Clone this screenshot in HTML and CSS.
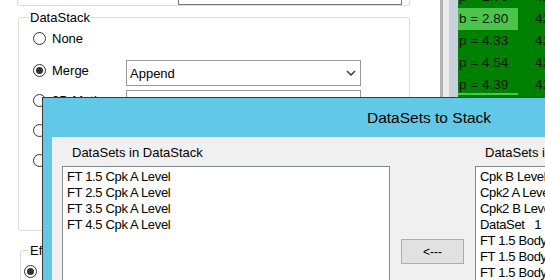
FILE: index.html
```html
<!DOCTYPE html>
<html lang="en">
<head>
    <meta charset="UTF-8">
    <meta name="viewport" content="width=device-width, initial-scale=1.0">
    <title>DataSets to Stack</title>
    <link rel="stylesheet" href="styles.css">
</head>
<body>
    <div class="main">
        <div class="form">
            <div class="topbox"><div class="textbox"></div></div>
            <fieldset class="group stack">
                <legend>DataStack</legend>
                <div class="row first"><label class="opt"><span class="radio"></span>None</label></div>
                <div class="row"><label class="opt"><span class="radio on"></span>Merge</label>
                    <div class="combo">Append
                        <svg width="10" height="6" viewBox="0 0 10 6"><path d="M1 1 L5 5 L9 1" fill="none" stroke="#444" stroke-width="1.6"/></svg>
                    </div>
                </div>
                <div class="row"><label class="opt"><span class="radio"></span>3D Math</label><div class="combo"></div></div>
                <div class="row"><label class="opt"><span class="radio"></span>Filter</label></div>
                <div class="row"><label class="opt"><span class="radio"></span>Sort</label></div>
            </fieldset>
            <fieldset class="group eff">
                <legend>Effect</legend>
                <div class="row first"><label class="opt"><span class="radio on"></span>All</label></div>
            </fieldset>
        </div>
        <div class="splitter"></div>
        <div class="gutter"></div>
        <div class="vbar"></div>
        <div class="grid">
            <div class="grow"><div class="c1">p = 2.70</div><div class="c2">42</div></div>
            <div class="grow"><div class="c1 hot">b = 2.80</div><div class="c2">42</div></div>
            <div class="grow"><div class="c1">p = 4.33</div><div class="c2">42</div></div>
            <div class="grow"><div class="c1">p = 4.54</div><div class="c2">42</div></div>
            <div class="grow short"><div class="c1">p = 4.39</div><div class="c2">42</div></div>
            <div class="grow"><div class="c1 edge"></div></div>
        </div>
    </div>

    <div class="dialog">
        <div class="titlebar">DataSets to Stack</div>
        <div class="client">
            <div class="col left">
                <div class="caption">DataSets in DataStack</div>
                <div class="listbox">
                    <div>FT 1.5 Cpk A Level</div>
                    <div>FT 2.5 Cpk A Level</div>
                    <div>FT 3.5 Cpk A Level</div>
                    <div>FT 4.5 Cpk A Level</div>
                </div>
            </div>
            <div class="mid">
                <button class="btn">&lt;---</button>
            </div>
            <div class="col right">
                <div class="caption">DataSets in Project</div>
                <div class="listbox">
                    <div>Cpk B Level</div>
                    <div>Cpk2 A Level</div>
                    <div>Cpk2 B Level</div>
                    <div>DataSet&nbsp;&nbsp;&nbsp;1</div>
                    <div>FT 1.5 Body A</div>
                    <div>FT 1.5 Body B</div>
                    <div>FT 1.5 Body C</div>
                </div>
            </div>
        </div>
    </div>
</body>
</html>
```

FILE: styles.css
```css
body{
    margin: 0;
    width: 545px;
    height: 280px;
    overflow: hidden;
    position: relative;
    background: #fff;
    font-family: "Liberation Sans", Arial, sans-serif;
    color: #000;
}
.main{
    display: flex;
    height: 280px;
}
.form{
    width: 440px;
    flex: none;
    background: #fff;
}
.topbox{
    margin-left: 17px;
    width: 393px;
    height: 6px;
    box-sizing: border-box;
    border: 1px solid #dcdcdc;
    border-top: none;
    border-radius: 0 0 3px 3px;
    display: flex;
    justify-content: flex-end;
    padding-right: 7px;
}
.textbox{
    width: 224px;
    height: 5px;
    box-sizing: border-box;
    border: 1px solid #7a7a7a;
    border-top: none;
    background: #fff;
}
.group{
    margin: 0;
    border: 1px solid #dcdcdc;
    border-radius: 3px;
    box-sizing: border-box;
    min-width: 0;
}
.group legend{
    font-size: 13px;
    line-height: 15px;
    padding: 0 1px;
}
.stack{
    margin: 4px 0 0 18px;
    width: 392px;
    height: 221px;
    padding: 0 0 0 14px;
}
.stack legend{
    margin-left: -4px;
}
.eff{
    margin: 12px 0 0 20px;
    width: 390px;
    height: 80px;
    padding: 0 0 0 3px;
}
.eff legend{
    margin-left: 5px;
}
.row{
    display: flex;
    align-items: flex-start;
    height: 26px;
    margin-top: 4px;
}
.row.first{
    height: 21px;
    margin-top: 3px;
}
.row.first + .row{
    margin-top: 11px;
}
.opt{
    display: flex;
    align-items: center;
    height: 21px;
    width: 93px;
    flex: none;
    font-size: 13px;
}
.radio{
    width: 13px;
    height: 13px;
    box-sizing: border-box;
    border: 1px solid #333;
    border-radius: 50%;
    background: #fff;
    margin-right: 6px;
    flex: none;
    display: flex;
    align-items: center;
    justify-content: center;
}
.radio.on::after{
    content: "";
    width: 7px;
    height: 7px;
    border-radius: 50%;
    background: #333;
}
.combo{
    width: 235px;
    height: 26px;
    box-sizing: border-box;
    border: 1px solid #999;
    background: #fff;
    display: flex;
    align-items: center;
    justify-content: space-between;
    padding: 0 4px 0 3px;
    font-size: 13px;
}
.splitter{
    width: 3px;
    flex: none;
    background: #b4b4b4;
}
.gutter{
    width: 6px;
    flex: none;
    background: #ececec;
}
.vbar{
    width: 9px;
    flex: none;
    background: #c6d1dd;
}
.grid{
    flex: 1;
    background: #008000;
    overflow: hidden;
}
.grow{
    display: flex;
    height: 22px;
    line-height: 22px;
    font-size: 13.5px;
    color: #061806;
}
.grow:first-child{
    margin-top: -14px;
}
.grow.short{
    height: 19px;
}
.c1{
    width: 60px;
    flex: none;
    overflow: hidden;
    white-space: nowrap;
    padding-left: 1px;
    box-sizing: border-box;
}
.c1.hot{
    background: #4cc44c;
}
.c1.edge{
    border-top: 2px solid #4cc44c;
}
.c2{
    padding-left: 17px;
    white-space: nowrap;
}
.dialog{
    position: absolute;
    left: 42px;
    top: 97px;
    width: 540px;
    height: 220px;
    background: #62c8e8;
    border-left: 1px solid #3a3a3a;
    border-top: 1px solid #3a3a3a;
}
.titlebar{
    height: 39px;
    display: flex;
    align-items: center;
    padding-left: 324px;
    font-size: 15.5px;
}
.client{
    margin-left: 9px;
    height: 200px;
    background: #f0f0f0;
    display: flex;
    padding: 8px 0 0 10px;
}
.col.left{
    width: 328px;
    flex: none;
}
.col.right{
    width: 200px;
    flex: none;
}
.mid{
    width: 85px;
    flex: none;
    display: flex;
    justify-content: center;
}
.caption{
    margin-left: 10px;
    font-size: 13px;
    line-height: 16px;
    height: 16px;
    white-space: nowrap;
}
.listbox{
    margin-top: 5px;
    height: 200px;
    box-sizing: border-box;
    background: #fff;
    border: 1px solid #828790;
    padding: 2px 0 0 4px;
    font-size: 13px;
    line-height: 16px;
    letter-spacing: -0.35px;
    white-space: nowrap;
    overflow: hidden;
}
.btn{
    margin-top: 94px;
    width: 63px;
    height: 25px;
    box-sizing: border-box;
    border: 1px solid #adadad;
    background: #e1e1e1;
    font-family: "Liberation Sans", Arial, sans-serif;
    font-size: 12px;
    color: #000;
    padding: 0;
}
```
